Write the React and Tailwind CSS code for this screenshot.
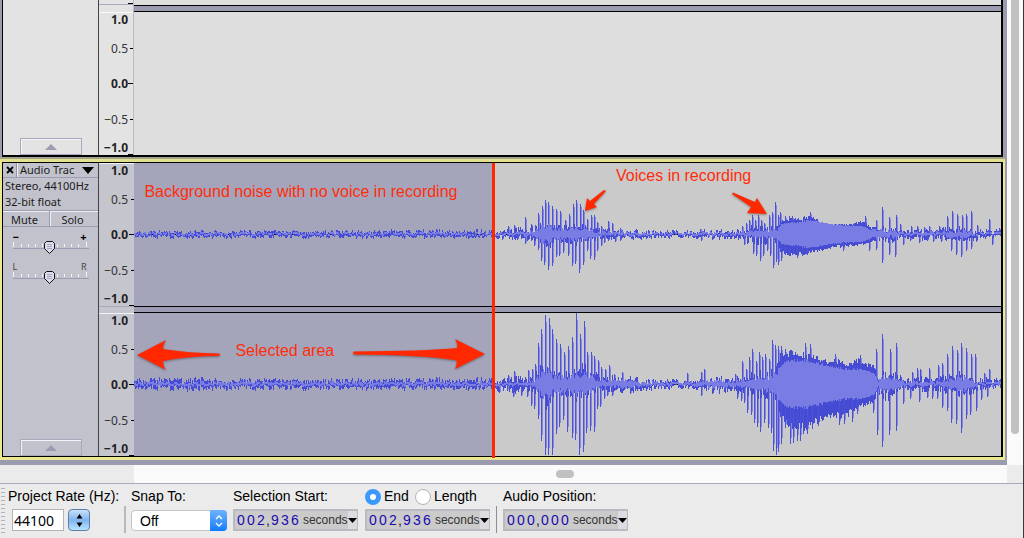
const HALF = 71
const WIDTH = 867

// envelope: [x, up, down, rms]
// peaks: [x, height], negative heights go below the zero line
const LEFT = {
  envelope: [
    [0, 3, 3, 1], [358, 4, 3, 1], [380, 6, 5, 2], [396, 8, 7, 3], [403, 10, 10, 6], [408, 14, 14, 11], [416, 14, 14, 11],
    [422, 10, 10, 6], [434, 9, 8, 6], [442, 12, 12, 9], [450, 10, 10, 8], [458, 8, 8, 4], [470, 6, 6, 2], [490, 4, 4, 2],
    [505, 5, 4, 2], [525, 3, 3, 1], [562, 3, 3, 1], [570, 4, 4, 2], [600, 4, 4, 1], [606, 5, 6, 2], [620, 9, 10, 4],
    [634, 9, 11, 5], [644, 10, 13, 6], [647, 15, 20, 11], [660, 17, 22, 12], [666, 16, 21, 13], [676, 19, 20, 15],
    [690, 11, 16, 12], [700, 10, 13, 10], [716, 11, 12, 9], [730, 14, 10, 8], [737, 6, 7, 4], [748, 9, 9, 5],
    [760, 7, 7, 4], [768, 4, 5, 1], [786, 5, 5, 2], [806, 5, 5, 2], [815, 8, 7, 4], [832, 8, 7, 4], [841, 4, 5, 1], [866, 4, 3, 1],
  ],
  peaks: [
    [374, 8], [380, 9], [391, 17], [397, 10], [401, 9], [404, 21], [408, 28], [411, 34], [414, 32], [418, 28], [422, 25],
    [426, 23], [431, 14], [435, 20], [439, 30], [442, 34], [446, 30], [449, 24], [453, 15], [457, 19], [460, 19],
    [463, 12], [467, 8], [474, 13], [478, 11], [486, 6], [368, -6], [383, -6], [391, -10], [397, -7], [400, -12],
    [404, -16], [407, -27], [410, -31], [414, -36], [418, -32], [422, -23], [425, -22], [429, -19], [434, -22],
    [438, -32], [441, -30], [445, -39], [449, -31], [453, -17], [456, -25], [460, -26], [463, -17], [467, -12],
    [470, -9], [474, -7], [481, -8], [486, -7], [566, 5], [567, -7],
    [608, 8], [612, 11], [615, 14], [618, 19], [621, 14], [624, 19], [627, 14], [630, 11], [635, 19], [638, 22],
    [641, 32], [644, 19], [646, 22], [651, 18], [655, 18], [658, 18], [664, 16], [670, 18], [676, 22], [731, 18],
    [742, 14], [748, 27], [755, 17], [762, 19], [766, 10], [610, -11], [613, -10], [619, -20], [622, -22], [626, -27],
    [629, -22], [633, -17], [636, -22], [639, -34], [642, -28], [644, -31], [647, -27], [651, -21], [655, -22],
    [659, -20], [663, -24], [668, -22], [673, -20], [709, -17], [735, -17], [742, -16], [748, -29], [755, -21],
    [761, -23], [769, -11], [777, 8], [783, 8], [790, 7], [795, 8], [805, 8], [809, 6], [813, 18], [818, 23],
    [823, 20], [828, 19], [832, 20], [837, 23], [843, 9], [855, 15], [865, 6], [776, -7], [785, -9], [793, -7],
    [799, -8], [807, -8], [817, -17], [822, -21], [827, -23], [832, -17], [837, -15], [842, -8], [858, -11],
  ],
}

const RIGHT = {
  envelope: [
    [0, 7, 6, 2], [30, 7, 5, 2], [60, 7, 6, 2], [90, 5, 5, 2], [358, 6, 5, 2], [370, 7, 8, 2], [390, 10, 10, 2], [400, 12, 11, 4],
    [405, 20, 18, 12], [412, 28, 28, 20], [416, 22, 20, 15], [424, 13, 12, 9], [438, 14, 12, 10], [443, 23, 20, 16],
    [450, 22, 18, 14], [458, 14, 13, 9], [467, 9, 9, 3], [480, 8, 8, 4], [490, 10, 9, 5], [498, 9, 8, 4], [510, 5, 5, 2],
    [545, 4, 4, 2], [565, 5, 4, 2], [572, 8, 8, 4], [585, 7, 8, 4], [600, 6, 7, 3], [607, 9, 11, 4], [620, 14, 13, 6],
    [636, 16, 17, 10], [642, 22, 24, 14], [646, 31, 34, 19], [650, 34, 40, 23], [660, 34, 48, 25], [672, 31, 47, 25], [684, 28, 41, 22],
    [693, 25, 34, 19], [705, 25, 34, 17], [712, 21, 33, 16], [724, 27, 25, 16], [732, 22, 21, 15], [740, 19, 17, 11],
    [744, 8, 12, 4], [750, 18, 22, 12], [757, 14, 12, 8], [764, 12, 11, 5], [770, 5, 6, 2], [785, 8, 7, 3], [800, 7, 7, 2],
    [812, 10, 10, 5], [826, 14, 13, 9], [838, 10, 10, 5], [844, 5, 6, 1], [855, 7, 6, 2], [866, 5, 5, 2],
  ],
  peaks: [
    [374, 9], [380, 13], [394, 14], [398, 15], [401, 20], [404, 41], [407, 55], [411, 69], [415, 66], [418, 55],
    [422, 45], [426, 40], [430, 32], [434, 38], [438, 47], [442, 71], [446, 50], [450, 63], [453, 32], [457, 32],
    [460, 28], [464, 24], [467, 17], [471, 15], [475, 19], [480, 10], [488, 12], [365, -9], [373, -7], [379, -13],
    [387, -12], [393, -13], [397, -22], [400, -25], [404, -35], [407, -57], [411, -71], [414, -71], [418, -71],
    [422, -50], [425, -43], [429, -36], [433, -48], [438, -54], [441, -56], [445, -71], [449, -68], [452, -49],
    [456, -47], [460, -48], [463, -25], [466, -23], [470, -15], [473, -12], [478, -12], [496, -10],
    [553, 11], [567, 12], [570, 15], [567, -12], [601, 10], [603, -15], [607, -17], [608, 23],
    [612, 15], [615, 27], [618, 35], [622, 23], [625, 32], [628, 27], [631, 30], [635, 25], [638, 44], [641, 39],
    [644, 38], [647, 38], [651, 35], [671, 41], [676, 40], [701, 30], [726, 29], [742, 35], [748, 50], [756, 35], [762, 41],
    [610, -19], [613, -29], [617, -31], [620, -39], [623, -43], [626, -48], [630, -39], [634, -44], [637, -49],
    [639, -67], [642, -71], [644, -68], [647, -60], [651, -44], [656, -60], [659, -59], [663, -57], [666, -57],
    [669, -50], [673, -50], [678, -45], [684, -42], [705, -41], [710, -40], [718, -38], [723, -30], [739, -29],
    [743, -51], [748, -63], [755, -51], [762, -47], [769, -20], [778, 12], [783, 16], [786, 15], [795, 16],
    [804, 19], [808, 21], [813, 30], [818, 38], [823, 34], [827, 41], [832, 36], [837, 30], [841, 30], [850, 11],
    [855, 15], [776, -15], [785, -18], [793, -14], [798, -15], [803, -15], [808, -24], [813, -27], [817, -39],
    [822, -40], [827, -49], [832, -35], [836, -31], [842, -27], [847, -16], [853, -13],
  ],
}

function noise(n) {
  const v = Math.sin(n * 127.1 + 11.7) * 43758.5453
  return v - Math.floor(v)
}

function envelopeAt(points, x) {
  let i = 0
  while (i < points.length - 2 && points[i + 1][0] <= x) i++
  const a = points[i]
  const b = points[i + 1]
  const t = (x - a[0]) / (b[0] - a[0])
  return [1, 2, 3].map((k) => a[k] + (b[k] - a[k]) * t)
}

function buildPaths({ envelope, peaks }) {
  let peak = ''
  let rms = ''
  for (let x = 0; x < WIDTH; x++) {
    const [up, down, mid] = envelopeAt(envelope, x)
    // only the sustained vowel is a solid block
    const block = x > 643 && x < 742
    const spread = block ? 0.22 : 0.9
    const top = Math.round(up * (1 - noise(x) * spread))
    const bottom = Math.round(down * (1 - noise(x + 1000) * spread))
    const core = Math.round(mid * (1 - noise(x + 2000) * (block ? 0.12 : 0.6)))
    // quiet passages wander around the zero line instead of straddling it
    const drift = up < 9 ? Math.round((noise((x >> 1) + 3000) - 0.5) * 3) : 0
    peak += `M${x + 0.5} ${HALF - top + drift}V${HALF + bottom + 1 + drift}`
    rms += `M${x + 0.5} ${HALF - core + drift}V${HALF + core + drift}`
  }
  const spikes = peaks.map(([x, h]) => `M${x + 0.5} ${HALF}V${HALF - h}`).join('')
  const halo = peaks.map(([x, h]) => `M${x + 1.5} ${HALF}V${HALF - Math.round(h * 0.9)}`).join('')
  return { peak, rms, spikes, halo }
}

const LEFT_PATHS = buildPaths(LEFT)
const RIGHT_PATHS = buildPaths(RIGHT)

function Waveform({ paths }) {
  return (
    <div className="relative flex h-[143px] bg-[#cacaca]">
      <div className="w-[41.4%] bg-[#a4a5ba]" />
      <svg
        className="absolute inset-0 h-full w-full"
        viewBox="0 0 867 143"
        preserveAspectRatio="none"
        shapeRendering="crispEdges"
        fill="none"
      >
        <path d="M0 71.5H867" stroke="#111" />
        <path d={paths.halo} stroke="#8588de" />
        <path d={paths.peak} stroke="#464bd3" />
        <path d={paths.spikes} stroke="#4d52d6" />
        <path d={paths.rms} stroke="#787ce3" />
      </svg>
    </div>
  )
}

const RULER_ROWS = [
  { label: '1.0', row: 'h-[13px] items-center font-bold text-[#222]', tick: '' },
  { label: '0.5', row: 'h-[44px] items-center text-[#333]', tick: 'w-[3px]' },
  { label: '0.0', row: 'h-[27px] items-center font-bold text-[#222]', tick: 'w-[5px]' },
  { label: '-0.5', row: 'h-[44px] items-center text-[#333]', tick: 'w-[3px]' },
  { label: '-1.0', row: 'h-[14px] items-start font-bold text-[#222]', tick: 'w-[5px] self-end' },
]

function Ruler() {
  return (
    <div className="h-[143px] border-t border-white/80">
      {RULER_ROWS.map((r) => (
        <div key={r.label} className={`flex ${r.row}`}>
          <span className="w-[29px] text-right text-[12px] leading-[13px]">{r.label.replace('-', '−')}</span>
          <span className="flex-1" />
          <span className={`h-px bg-black ${r.tick}`} />
        </div>
      ))}
    </div>
  )
}

function CollapseButton() {
  return (
    <button
      type="button"
      aria-label="Collapse track"
      className="mx-auto mt-auto flex h-[17px] w-[62px] items-center justify-center border border-[#a9a9bd] shadow-[inset_1px_1px_0_#f3f3fa]"
    >
      <svg width="12" height="6" viewBox="0 0 12 6">
        <path d="M6 0l6 6H0z" fill="#9c9db3" />
      </svg>
    </button>
  )
}

function TrackSlider({ label, left, right, small }) {
  return (
    <label className="relative mx-auto block h-[30px] w-[76px]">
      <span className={`flex justify-between leading-[8px] ${small ? 'text-[9px] text-[#444]' : 'text-[11px] font-bold text-black'}`}>
        <span>{left}</span>
        <span className="pr-[2px]">{right}</span>
      </span>
      <svg className="block" width="76" height="15" viewBox="0 0 76 15" shapeRendering="crispEdges">
        <path
          d="M.5 1v5M8.500 3v3M15.500 3v3M22.500 3v3M29.500 3v3M44.500 3v3M51.500 3v3M58.500 3v3M65.500 3v3M73.500 1v5"
          stroke="#f4f4fa"
        />
        <path d="M0 7.500h76" stroke="#9c9db3" />
        <path
          d="M33.500.5h6l2 2v5L36.500 12.500 31.500 7.500v-5z"
          fill="#dcdcec"
          stroke="#111"
          shapeRendering="geometricPrecision"
        />
        <path d="M34 3.500h5M34 5.500h5M34 7.500h5" stroke="#a5a6bd" />
      </svg>
      <input type="range" min="-1" max="1" step="0.1" defaultValue="0" aria-label={label} className="absolute inset-x-0 top-2 h-4 w-full opacity-0" />
    </label>
  )
}

function TrackPanel() {
  return (
    <div className="flex w-[95px] flex-col bg-[#c2c2cc] text-[11px] text-[#1c1c1c]">
      <div className="flex h-[15px] border-b border-[#9c9db3]">
        <button type="button" aria-label="Close track" className="flex w-[14px] items-center justify-center border-r border-[#8f90a6]">
          <svg width="8" height="8" viewBox="0 0 8 8">
            <path d="M1 1l6 6M7 1L1 7" stroke="#000" strokeWidth="1.800" />
          </svg>
        </button>
        <button type="button" className="flex flex-1 items-center justify-between border-l border-[#eeeef5] pr-1 pl-[2px] leading-[14px]">
          Audio Trac
          <svg width="12" height="7" viewBox="0 0 12 7">
            <path d="M0 0h12L6 7z" fill="#000" />
          </svg>
        </button>
      </div>
      <div className="px-[2px] leading-4">
        <p>Stereo, 44100Hz</p>
        <p>32-bit float</p>
      </div>
      <div className="flex h-[17px] border-y border-[#9c9db3] leading-[11px]">
        <button type="button" className="w-[47px] border-t border-[#eeeef5] pr-1">Mute</button>
        <button type="button" className="flex-1 border-t border-l border-[#eeeef5] pr-1 shadow-[-1px_0_0_#9c9db3]">Solo</button>
      </div>
      <div className="pt-[6px]">
        <TrackSlider label="Gain" left="−" right="+" />
        <TrackSlider label="Pan" left="L" right="R" small />
      </div>
      <CollapseButton />
    </div>
  )
}

function ChannelGap() {
  return <div className="h-[7px] border-y border-black bg-[#9a9bb0]" />
}

function Annotations() {
  return (
    <div className="pointer-events-none absolute inset-0 font-[Liberation_Sans,Arial,sans-serif] text-[16px] leading-5 whitespace-nowrap text-[#ff2d0a]">
      <svg className="absolute inset-0 h-full w-full drop-shadow-[0_1px_1px_rgba(0,0,0,0.35)]" viewBox="0 0 867 293" preserveAspectRatio="none" fill="#ff2800">
        <path d="M3 192L32 177Q29 181 29 186Q55 190 85 190.500Q87 191.500 85 193Q55 193 29 198Q29 203 32 207Z" />
        <path d="M351 191L321 176Q324 181 323 185Q290 188 220 188.500Q218 190 220 191.500Q290 192 323 197.500Q323 202 321 206Z" />
        <path d="M451 48L453 35L456 38L470 27L472 28L460 41L463 44Z" />
        <path d="M633 51L623 35L621 39L599 29.500L598 31L617 44L613 50Z" />
      </svg>
      <div className="absolute top-0 -bottom-[2px] left-[41.300%] w-[3px] bg-[#ff2800]" />
      <span className="absolute top-[19px] left-[1.200%]">Background noise with no voice in recording</span>
      <span className="absolute top-[3px] left-[55.600%]">Voices in recording</span>
      <span className="absolute top-[178px] left-[11.700%]">Selected area</span>
    </div>
  )
}

function TimeField({ label, value }) {
  return (
    <div role="group" aria-label={label} className="flex h-[22px] w-[125px] items-center border-2 border-[#b9b9bf] bg-[#cbcbcb] pl-px">
      {value.split('').map((c, i) =>
        c === ',' ? (
          <span key={i} className="w-[4px] text-[14px] text-[#222]">,</span>
        ) : (
          <input
            key={i}
            aria-label={`${label} digit ${i + 1}`}
            defaultValue={c}
            className="w-[10px] p-0 text-center font-[Liberation_Sans,Arial,sans-serif] text-[14px] text-[#1a0cae]"
          />
        ),
      )}
      <span className="pl-[3px] text-[12px] text-[#333]">seconds</span>
      <button type="button" aria-label={`${label} format`} className="ml-auto flex h-full w-[9px] items-center justify-center bg-[#dcdce0]">
        <svg className="shrink-0" width="9" height="5" viewBox="0 0 9 5">
          <path d="M0 0h9L4.500 5z" fill="#000" />
        </svg>
      </button>
    </div>
  )
}

function Radio({ label, checked }) {
  return (
    <label className="flex items-center gap-[3px]">
      <input
        type="radio"
        name="selection-mode"
        defaultChecked={checked}
        className="h-4 w-4 appearance-none rounded-full border border-[#b4b4b4] bg-white checked:border-[5px] checked:border-[#3b99fc]"
      />
      {label}
    </label>
  )
}

function SelectionToolbar() {
  return (
    <div className="flex h-[55px] border-t border-[#a9a9bd] bg-[#ebebeb] font-[Liberation_Sans,Arial,sans-serif] text-[14px] whitespace-nowrap text-black">
      <div className="my-1 ml-[1px] w-[4px] bg-[repeating-linear-gradient(#b4b4c4_0_1px,transparent_1px_4px)]" />

      <div className="flex w-[119px] flex-col gap-1 pt-1 pl-[3px]">
        <label htmlFor="project-rate" className="leading-[17px]">Project Rate (Hz):</label>
        <div className="flex items-center gap-1 pl-1">
          <input
            id="project-rate"
            defaultValue="44100"
            className="h-[22px] w-[52px] border border-[#b4b4b4] bg-white pl-px font-[Noto_Sans,sans-serif] text-[14px]"
          />
          <button
            type="button"
            aria-label="Choose project rate"
            className="flex h-[22px] w-[22px] items-center justify-center rounded-[4px] border border-[#5c7fae] bg-linear-to-b from-[#c9e0f7] via-[#7fb5ee] to-[#b8e2ff]"
          >
            <svg width="7" height="13" viewBox="0 0 7 13">
              <path d="M3.500 0L6.500 4.500h-6zM3.500 13L6.500 8.500h-6z" fill="#000" />
            </svg>
          </button>
        </div>
      </div>

      <div className="mt-[22px] h-[27px] w-[2px] bg-[#b9b9b9]" />

      <div className="flex w-[107px] flex-col gap-[5px] pt-1 pl-[5px]">
        <label htmlFor="snap-to" className="leading-[17px]">Snap To:</label>
        <div className="relative h-[21px] w-[96px]">
          <select id="snap-to" className="h-full w-full appearance-none rounded-[4px] border border-[#c4c4c4] bg-white pl-2">
            <option>Off</option>
            <option>Nearest</option>
            <option>Prior</option>
          </select>
          <span className="pointer-events-none absolute inset-y-0 right-0 flex w-[17px] items-center justify-center rounded-r-[4px] bg-linear-to-b from-[#6cb3fa] to-[#0a7bff]">
            <svg width="8" height="12" viewBox="0 0 8 12" fill="none" stroke="#fff" strokeWidth="1.400">
              <path d="M1 4l3-3 3 3M1 8l3 3 3-3" />
            </svg>
          </span>
        </div>
      </div>

      <div className="flex flex-col gap-1 pt-1">
        <span className="leading-[17px]">Selection Start:</span>
        <TimeField label="Selection Start" value="002,936" />
      </div>

      <div className="ml-[7px] flex flex-col gap-1 pt-1">
        <div className="flex h-[17px] items-center gap-[6px]">
          <Radio label="End" checked />
          <Radio label="Length" />
        </div>
        <TimeField label="Selection End" value="002,936" />
      </div>

      <div className="mt-[22px] ml-[6px] h-[27px] w-px bg-[#8f8f8f]" />

      <div className="ml-[6px] flex flex-col gap-1 pt-1">
        <span className="leading-[17px]">Audio Position:</span>
        <TimeField label="Audio Position" value="000,000" />
      </div>
    </div>
  )
}

export default function App() {
  return (
    <div className="min-h-screen border-r border-[#3a3735] bg-[#ebebeb] font-[Noto_Sans,sans-serif]">
      <div className="flex">
        <div className="min-w-0 flex-1 bg-[#9a9bb0] pb-[5px]">

          {/* Empty track */}
          <div className="pr-1 pl-[2px]">
            <div className="flex border-x-2 border-b-2 border-l-1 border-black bg-[#e3e3e3]">
              <div className="flex w-[95px] flex-col">
                <CollapseButton />
              </div>
              <div className="w-[36px] border-r border-l border-r-[#b9b9cc] border-l-[#444]">
                <div className="flex h-[5px] justify-end border-b border-[#a9a9bd]">
                  <span className="w-[5px] self-end border-b border-black" />
                </div>
                <div className="h-[7px]" />
                <Ruler />
              </div>
              <div className="flex-1 bg-[#dedede]">
                <div className="h-[5px]" />
                <ChannelGap />
              </div>
            </div>
          </div>

          {/* Stereo track */}
          <div className="border-t-2 border-[#a3a48f] bg-[#9a9bb0] pr-[2px]">
            <div className="border-2 border-y-3 border-[#ebe88f] border-t-[#e4e18c]">
              <div className="flex border-x-2 border-y border-l-1 border-black">
                <TrackPanel />
                <div className="w-[36px] border-l border-[#444] bg-[#c5c5ce]">
                  <Ruler />
                  <div className="h-[7px] border-t border-[#a9a9bd]" />
                  <Ruler />
                </div>
                <div className="relative flex-1">
                  <Waveform paths={LEFT_PATHS} />
                  <ChannelGap />
                  <Waveform paths={RIGHT_PATHS} />
                  <Annotations />
                </div>
              </div>
            </div>
          </div>
        </div>

        {/* Vertical scrollbar */}
        <div className="flex w-4 justify-center bg-[#fafafa]">
          <div className="mb-[31px] w-[8px] rounded-b-full bg-[#c1c1c1]" />
        </div>
      </div>

      {/* Horizontal scrollbar */}
      <div className="flex h-[18px] pr-4">
        <div className="w-[134px]" />
        <div className="flex flex-1 items-center bg-[#fafafa]">
          <div className="ml-[48.300%] h-2 w-[18px] rounded-full bg-[#c1c1c1]" />
        </div>
      </div>

      <SelectionToolbar />
    </div>
  )
}
